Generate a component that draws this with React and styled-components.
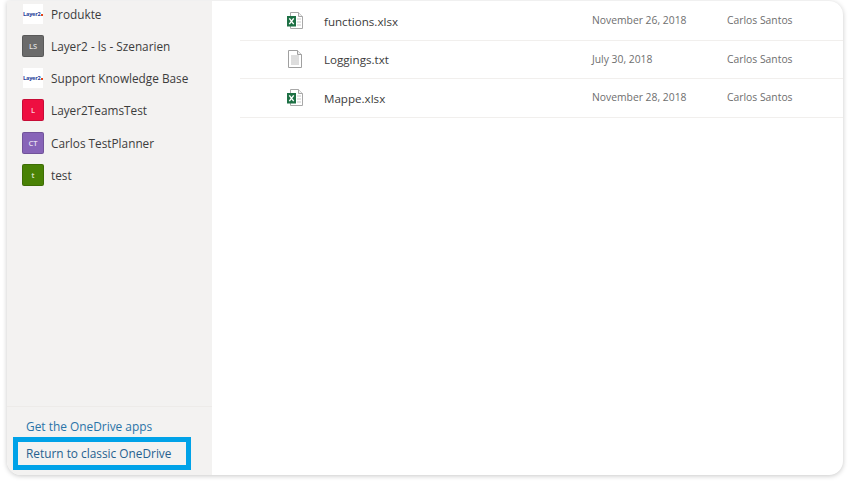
import React from "react";
import styled, { createGlobalStyle } from "styled-components";

const GlobalStyle = createGlobalStyle`
  html, body {
    margin: 0;
    height: 100%;
    background: #fff;
    font-family: "Open Sans", "Noto Sans", sans-serif;
    overflow: hidden;
  }
`;

const Page = styled.div`
  width: 850px;
  height: 482px;
  padding: 1px 7px 7px 7px;
  box-sizing: border-box;
`;

const Shell = styled.div`
  display: flex;
  height: 100%;
  background: #fff;
  border-radius: 0 14px 14px 14px;
  box-shadow: 0 1px 5px rgba(0, 0, 0, 0.22);
  overflow: hidden;
`;

const Sidebar = styled.aside`
  width: 205px;
  flex: none;
  display: flex;
  flex-direction: column;
  background: #f3f2f1;
`;

const SiteList = styled.div`
  flex: 1;
  margin-top: -3px;
`;

const SiteRow = styled.div`
  height: 32.15px;
  display: flex;
  align-items: center;
  gap: 7px;
  padding-left: 15px;
  font-size: 11.8px;
  color: #3c3c3c;
`;

const SiteBadge = styled.span`
  width: 22px;
  height: 22px;
  flex: none;
  box-sizing: border-box;
  border-radius: 2px;
  border: 1px solid rgba(0, 0, 0, 0.16);
  background: ${p => p.$color};
  color: rgba(255, 255, 255, 0.8);
  font-size: 7.5px;
  font-weight: 600;
  display: flex;
  align-items: center;
  justify-content: center;
`;

const LogoBadge = styled.span`
  width: 20px;
  height: 20px;
  margin: 0 1px;
  flex: none;
  background: #fff;
  display: flex;
  align-items: center;
  justify-content: center;
  gap: 0.5px;
  white-space: nowrap;
  font-size: 5.6px;
  font-weight: 700;
  letter-spacing: -0.25px;
  color: #24419a;
`;

const LogoMark = styled.span`
  width: 2px;
  height: 2px;
  flex: none;
  margin-top: 1px;
  background: #e2451d;
`;

const SideFooter = styled.div`
  height: 69px;
  box-sizing: border-box;
  border-top: 1px solid #edebe9;
  padding-top: 11px;
`;

const FooterLink = styled.div`
  font-size: 11.9px;
  line-height: 17px;
  color: #2a74a8;
  padding-left: 19px;
`;

const HighlightLink = styled.div`
  margin: 2px 0 0 6px;
  width: 178px;
  height: 33px;
  box-sizing: border-box;
  border: 5px solid #00a2e8;
  display: flex;
  align-items: center;
  padding: 0 0 2px 8px;
  font-size: 11.85px;
  color: #27618f;
  white-space: nowrap;
`;

const Content = styled.main`
  flex: 1;
  padding: 1px 0 0 28px;
`;

const FileRow = styled.div`
  height: 38.5px;
  box-sizing: border-box;
  border-bottom: 1px solid #f1efed;
  display: grid;
  grid-template-columns: 84px 268px 135px 1fr;
  align-items: center;
`;

const IconCell = styled.div`
  padding-left: 47px;
  display: flex;
`;

const FileName = styled.div`
  font-size: 11.6px;
  color: #3c3c3c;
  padding-top: 1px;
`;

const FileMeta = styled.div`
  font-size: 10.35px;
  color: #6e6e6e;
  padding-bottom: 1px;
`;

const ExcelIcon = () => (
  <svg width="16" height="17" viewBox="0 0 16 17">
    <path d="M3.500 .5h8l4 4v12h-12z" fill="#fff" stroke="#a8a8a8" />
    <path d="M11.500 .5v4h4" fill="#f0f0f0" stroke="#a8a8a8" />
    <path d="M10 7h4M10 10h4M10 13h4" stroke="#c8c8c8" />
    <rect x="0" y="4" width="9" height="10.500" fill="#1d7044" />
    <path d="M2.300 6.300 6.700 12.200M6.700 6.300 2.300 12.200" stroke="#fff" strokeWidth="1.400" />
  </svg>
);

const TextIcon = () => (
  <svg width="16" height="18" viewBox="0 0 16 18">
    <path d="M1.500 .5h9l4 4v13h-13z" fill="#fff" stroke="#a0a0a0" />
    <path d="M10.500 .5v4h4" fill="#eee" stroke="#a0a0a0" />
    <path d="M4 6h8M4 8h8M4 10h8M4 12h8M4 14h8" stroke="#bcbcbc" />
  </svg>
);

const sites = [
  { name: "Produkte", logo: true },
  { name: "Layer2 - ls - Szenarien", initials: "LS", color: "#6b6b6b" },
  { name: "Support Knowledge Base", logo: true },
  { name: "Layer2TeamsTest", initials: "L", color: "#ee0f41" },
  { name: "Carlos TestPlanner", initials: "CT", color: "#8764b8" },
  { name: "test", initials: "t", color: "#498205" }
];

const files = [
  { name: "functions.xlsx", date: "November 26, 2018", Icon: ExcelIcon },
  { name: "Loggings.txt", date: "July 30, 2018", Icon: TextIcon },
  { name: "Mappe.xlsx", date: "November 28, 2018", Icon: ExcelIcon }
];

export default function App() {
  return (
    <Page>
      <GlobalStyle />
      <Shell>
        <Sidebar>
          <SiteList>
            {sites.map(site => (
              <SiteRow key={site.name}>
                {site.logo ? (
                  <LogoBadge>
                    Layer2
                    <LogoMark />
                  </LogoBadge>
                ) : (
                  <SiteBadge $color={site.color}>{site.initials}</SiteBadge>
                )}
                {site.name}
              </SiteRow>
            ))}
          </SiteList>
          <SideFooter>
            <FooterLink>Get the OneDrive apps</FooterLink>
            <HighlightLink>Return to classic OneDrive</HighlightLink>
          </SideFooter>
        </Sidebar>
        <Content>
          {files.map(({ name, date, Icon }) => (
            <FileRow key={name}>
              <IconCell>
                <Icon />
              </IconCell>
              <FileName>{name}</FileName>
              <FileMeta>{date}</FileMeta>
              <FileMeta>Carlos Santos</FileMeta>
            </FileRow>
          ))}
        </Content>
      </Shell>
    </Page>
  );
}
